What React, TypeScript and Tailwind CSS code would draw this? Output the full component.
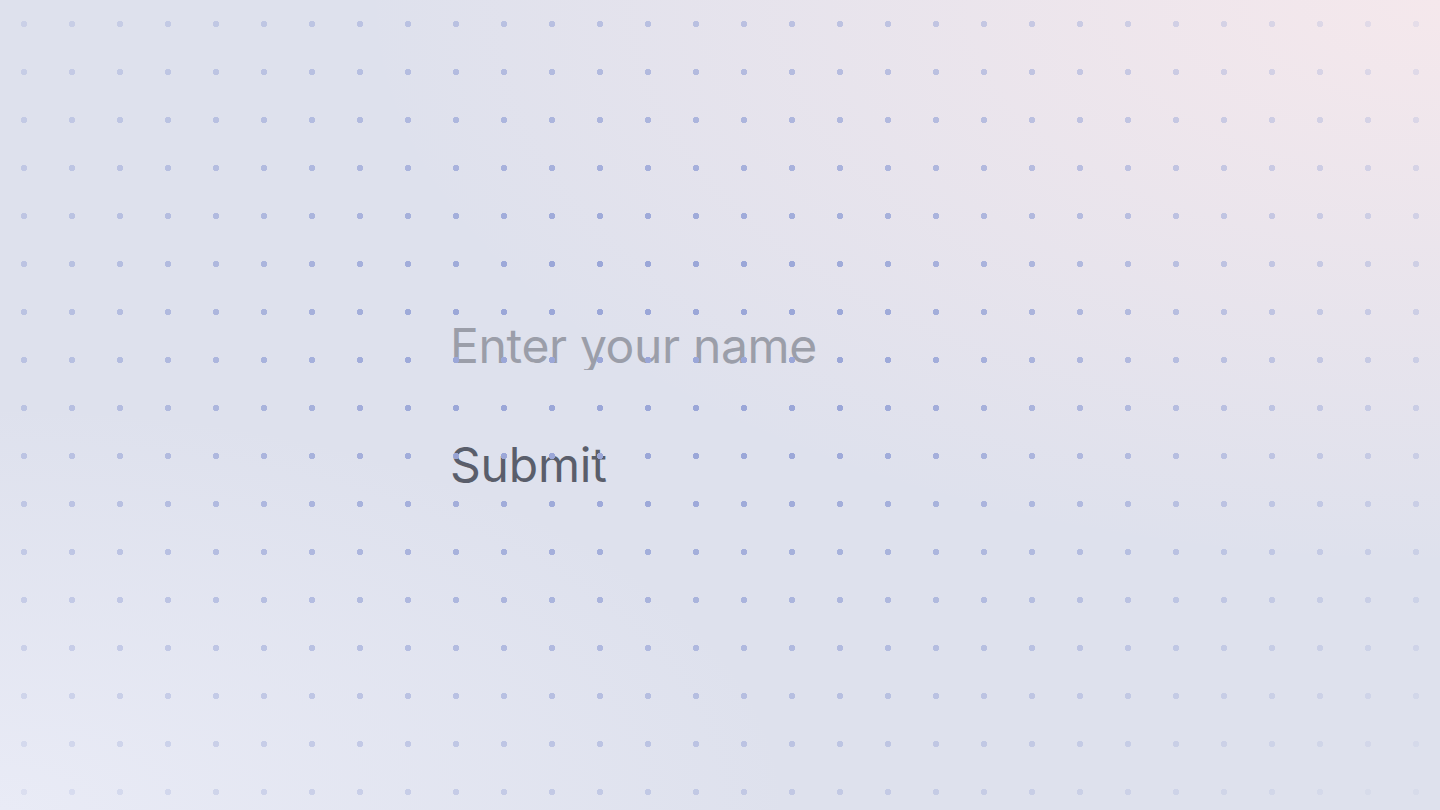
import { useState } from "react"

export default function App() {
  const [name, setName] = useState("")

  return (
    <main
      className="relative flex min-h-screen w-full items-center justify-center overflow-hidden bg-[#dee1ed] font-['Inter',sans-serif]"
      style={{
        backgroundImage:
          "radial-gradient(ellipse 75% 70% at 100% 0%, #f5e8ec 0%, rgba(245,232,236,0) 100%), radial-gradient(ellipse 55% 50% at 0% 100%, #e9ebf6 0%, rgba(233,235,246,0) 100%)",
      }}
    >
      <form
        className="relative flex w-[540px] flex-col items-start gap-[71px]"
        onSubmit={(e) => e.preventDefault()}
      >
        <input
          value={name}
          onChange={(e) => setName(e.target.value)}
          placeholder="Enter your name"
          className="h-12 w-full bg-transparent p-0 text-[48px] leading-none tracking-[-0.35px] text-[#4a4e5a] outline-none placeholder:text-[#9b9ea9]"
        />
        <button
          type="submit"
          className="p-0 text-[48px] leading-none tracking-[-0.2px] text-[#5a5e6b]"
        >
          Submit
        </button>
      </form>

      {/* dot grid, sits over the content */}
      <div className="pointer-events-none absolute inset-0 bg-[radial-gradient(circle,#9ba7d8_2.9px,transparent_3.4px)] bg-[length:48px_48px] [mask-image:radial-gradient(ellipse_70%_75%_at_45%_45%,black_20%,rgba(0,0,0,0.1)_100%)]" />
    </main>
  )
}
